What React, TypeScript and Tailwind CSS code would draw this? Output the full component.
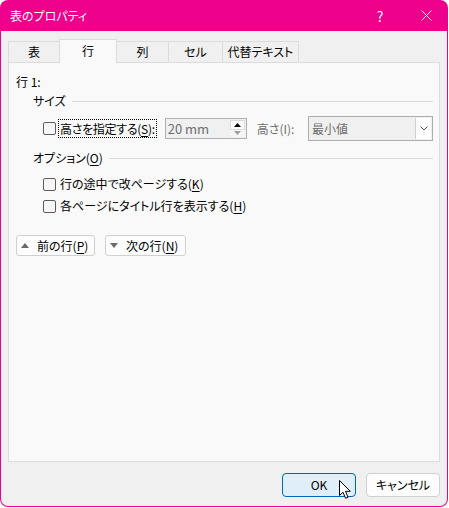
import React from "react";

function Checkbox() {
  return (
    <span className="inline-block w-[13px] h-[13px] border border-[#5c5c5c] rounded-[2px] bg-[#f7f7f7] shrink-0" />
  );
}

function Tab({ label, w, selected, first }: { label: string; w: string; selected?: boolean; first?: boolean }) {
  return (
    <div
      className={
        (first ? "" : "-ml-px ") +
        (selected
          ? "relative z-10 h-[24px] -mb-px bg-[#f9f9f9] border border-b-0 border-[#dcdcdc] pb-[2px] "
          : "h-[21px] bg-[#f0f0f0] border border-b-0 border-[#dcdcdc] ") +
        w +
        " flex items-center justify-center text-[12px] text-black whitespace-nowrap"
      }
    >
      {label}
    </div>
  );
}

export default function App() {
  return (
    <div
      className="w-[449px] h-[508px] bg-white text-[12px] leading-[16px] text-black whitespace-nowrap [font-feature-settings:'palt']"
      style={{ fontFamily: '"Noto Sans CJK JP", "Noto Sans", sans-serif' }}
    >
      <div className="relative w-[448px] h-[507px] bg-[#ec008c] rounded-[8px] overflow-hidden flex flex-col px-px pb-px">
        {/* Title bar */}
        <div className="h-[31px] shrink-0 flex items-center text-white">
          <div className="pl-[9px] flex-1">表のプロパティ</div>
          <div className="w-[46px] flex justify-center text-[14px]">?</div>
          <div className="w-[46px] flex justify-center mr-[-2px]">
            <svg width="11" height="11" viewBox="0 0 11 11">
              <path d="M0.5 0.5 L10.5 10.5 M10.5 0.5 L0.5 10.5" stroke="white" strokeWidth="1" />
            </svg>
          </div>
        </div>

        {/* Body */}
        <div className="flex-1 bg-[#f0f0f0] rounded-b-[7px] flex flex-col px-[7px] pt-[8px] pb-[9px]">
          {/* Tabs */}
          <div className="flex items-end h-[23px]">
            <Tab label="表" w="w-[52px]" first />
            <Tab label="行" w="w-[58px]" selected />
            <Tab label="列" w="w-[53px]" />
            <Tab label="セル" w="w-[55px]" />
            <Tab label="代替テキスト" w="w-[77px]" />
          </div>

          {/* Panel */}
          <div className="w-[432px] h-[400px] bg-[#f9f9f9] border border-[#dcdcdc] pl-[7px] pr-[6px] pt-[11px] flex flex-col">
            <div className="h-[16px]">行 1:</div>

            <div className="pl-[17px] flex flex-col">
              {/* サイズ */}
              <div className="mt-[3px] h-[16px] flex items-center gap-[6px]">
                <span>サイズ</span>
                <div className="flex-1 h-px bg-[#dadada]" />
              </div>

              <div className="mt-[7px] h-[25px] flex items-center pl-[10px]">
                <Checkbox />
                <div className="ml-[2px] shrink-0 h-[19px] border border-dotted border-black flex items-center pl-[1px] pr-[1px] tracking-[-0.3px]">
                  <span>
                    高さを指定する(<span className="underline underline-offset-2">S</span>):
                  </span>
                </div>
                <div className="ml-[8px] shrink-0 w-[82px] h-[21px] border border-[#b0b0b0] bg-[#f0f0f0] flex">
                  <div className="flex-1 pl-[2px] flex items-center text-[#6d6d6d] text-[13px]">20 mm</div>
                  <div className="w-[16px] flex flex-col py-px pr-px">
                    <div className="flex-1 bg-[#fbfbfb] border border-[#dcdcdc] flex items-center justify-center">
                      <svg width="7" height="4" viewBox="0 0 7 4"><path d="M0 4 L3.5 0 L7 4 Z" fill="#000" /></svg>
                    </div>
                    <div className="flex-1 bg-[#f5f5f5] flex items-center justify-center">
                      <svg width="7" height="4" viewBox="0 0 7 4"><path d="M0 0 L3.5 4 L7 0 Z" fill="#a0a0a0" /></svg>
                    </div>
                  </div>
                </div>
                <div className="ml-[10px] shrink-0 text-[#6d6d6d]">高さ(I):</div>
                <div className="ml-auto shrink-0 w-[125px] h-[25px] border border-[#adadad] bg-[#f0f0f0] flex">
                  <div className="flex-1 pl-[3px] flex items-center text-[#6d6d6d]">最小値</div>
                  <div className="w-[16px] my-px mr-px bg-white border-l border-[#cfcfcf] flex items-center justify-center">
                    <svg width="8" height="5" viewBox="0 0 8 5">
                      <path d="M0.5 0.5 L4 4 L7.5 0.5" stroke="#5a5a5a" strokeWidth="1" fill="none" />
                    </svg>
                  </div>
                </div>
              </div>

              {/* オプション */}
              <div className="mt-[9px] h-[16px] flex items-center gap-[6px]">
                <span>
                  オプション(<span className="underline underline-offset-2">O</span>)
                </span>
                <div className="flex-1 h-px bg-[#dadada]" />
              </div>

              <div className="mt-[10px] h-[16px] flex items-center pl-[10px] gap-[4px]">
                <Checkbox />
                <span>
                  行の途中で改ページする(<span className="underline underline-offset-2">K</span>)
                </span>
              </div>
              <div className="mt-[6px] h-[16px] flex items-center pl-[10px] gap-[4px]">
                <Checkbox />
                <span>
                  各ページにタイトル行を表示する(<span className="underline underline-offset-2">H</span>)
                </span>
              </div>
            </div>

            {/* Prev / Next */}
            <div className="mt-[21px] flex gap-[10px]">
              <div className="w-[79px] h-[21px] bg-[#fdfdfd] border border-[#d0d0d0] rounded-[3px] flex items-center pl-[4px]">
                <svg width="8" height="5" viewBox="0 0 8 5"><path d="M0 5 L4 0 L8 5 Z" fill="#6a6a6a" /></svg>
                <span className="ml-[8px]">
                  前の行(<span className="underline underline-offset-2">P</span>)
                </span>
              </div>
              <div className="w-[81px] h-[21px] bg-[#fdfdfd] border border-[#d0d0d0] rounded-[3px] flex items-center pl-[4px]">
                <svg width="8" height="5" viewBox="0 0 8 5"><path d="M0 0 L4 5 L8 0 Z" fill="#6a6a6a" /></svg>
                <span className="ml-[8px]">
                  次の行(<span className="underline underline-offset-2">N</span>)
                </span>
              </div>
            </div>
          </div>

          {/* Bottom buttons */}
          <div className="mt-auto flex justify-end gap-[10px]">
            <div className="relative w-[74px] h-[24px] bg-[#e0eef9] border border-[#0067c0] rounded-[4px] flex items-center justify-center">
              OK
              <svg className="absolute left-[56px] top-[6px]" width="13" height="20" viewBox="0 0 13 20">
                <path d="M0.5 0.5 L0.5 15.5 L4 12.2 L6.6 18.3 L9 17.3 L6.5 11.3 L11.3 11.3 Z" fill="white" stroke="black" strokeWidth="1" strokeLinejoin="round" />
              </svg>
            </div>
            <div className="w-[74px] h-[24px] bg-[#fdfdfd] border border-[#d0d0d0] rounded-[4px] flex items-center justify-center">
              キャンセル
            </div>
          </div>
        </div>
      </div>
    </div>
  );
}
